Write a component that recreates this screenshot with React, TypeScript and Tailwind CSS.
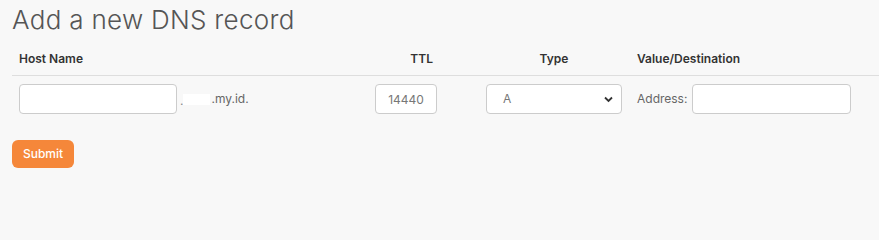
import React from "react";

export default function App() {
  return (
    <div className="w-full min-h-screen bg-[#f8f8f8] overflow-hidden" style={{ fontFamily: "Inter, 'Noto Sans', sans-serif" }}>
      <div className="pl-[12px] pt-[2px]">
        <h1 className="text-[26px] font-light text-[#555555] leading-[36px] tracking-[0.3px]">Add a new DNS record</h1>
        <div className="mt-[4px] flex items-center h-[34px] border-b border-[#dedede] text-[12px] font-semibold text-[#333333]">
          <div className="w-[356px] pl-[7px]">Host Name</div>
          <div className="w-[76px] pr-[11px] text-right">TTL</div>
          <div className="w-[185px] flex justify-end pr-[7px]">
            <div className="w-[136px] text-center">Type</div>
          </div>
          <div className="pl-[8px]">Value/Destination</div>
        </div>
        <div className="flex items-center h-[46px] text-[12px] text-[#666666]">
          <div className="w-[356px] pl-[7px] flex items-center">
            <input className="w-[158px] h-[30px] bg-white border border-[#cccccc] rounded-[4px] outline-none" />
            <span className="ml-[3px] mt-[4px] text-[#888]">.</span>
            <span className="inline-block w-[27px] h-[11px] bg-white mt-[1px]" />
            <span className="text-[#666666] ml-[1px]">.my.id.</span>
          </div>
          <div className="w-[76px] px-[7px]">
            <input defaultValue="14440" className="w-[62px] h-[30px] bg-white border border-[#cccccc] rounded-[4px] text-center text-[12px] text-[#777777] outline-none" />
          </div>
          <div className="w-[185px] flex justify-end pr-[7px]">
            <div className="relative w-[136px] h-[30px] bg-white border border-[#cccccc] rounded-[4px] flex items-center pl-[16px] text-[#777777]">
              <span>A</span>
              <svg className="absolute right-[8px] top-[11px]" width="9" height="7" viewBox="0 0 9 7">
                <path d="M1 1.5 L4.5 5 L8 1.5" fill="none" stroke="#333" strokeWidth="1.8" />
              </svg>
            </div>
          </div>
          <div className="pl-[8px] flex items-center">
            <span className="text-[#666666]">Address:</span>
            <input className="ml-[5px] w-[159px] h-[30px] bg-white border border-[#cccccc] rounded-[4px] outline-none" />
          </div>
        </div>
        <button className="mt-[18px] w-[62px] h-[28px] rounded-[6px] bg-[#f5873a] text-white text-[12px] font-medium">Submit</button>
      </div>
    </div>
  );
}
